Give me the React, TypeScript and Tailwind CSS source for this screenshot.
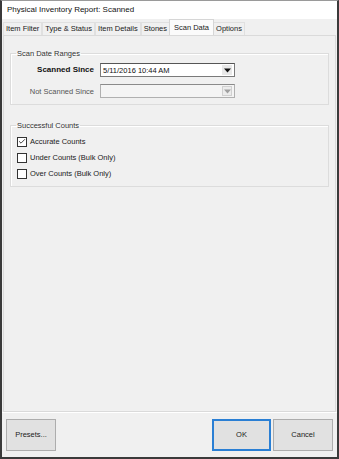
import { Check } from "lucide-react"

const tabs = ["Item Filter", "Type & Status", "Item Details", "Stones", "Scan Data", "Options"]

function Arrow({ disabled }: { disabled?: boolean }) {
  return (
    <svg width="7" height="5" viewBox="0 0 7 5">
      <path d="M0 0.5 H7 L3.5 4.5 Z" fill={disabled ? "#a0a0a0" : "#111"} />
    </svg>
  )
}

function CheckRow({ label, checked }: { label: string; checked?: boolean }) {
  return (
    <div className="flex items-center gap-[3px] h-[16px]">
      <div className="w-[10px] h-[10px] border border-[#333] bg-white flex items-center justify-center">
        {checked && <Check size={9} strokeWidth={2.5} className="text-[#222]" />}
      </div>
      <span>{label}</span>
    </div>
  )
}

export default function App() {
  return (
    <div
      className="w-[339px] h-[459px] flex flex-col bg-[#f0f0f0] border-l-[2px] border-r-[2px] border-b-[2px] border-t border-t-[#9a9a9a] border-[#3a3a3a] text-[7.5px] text-[#1a1a1a]"
      style={{ fontFamily: '"Liberation Sans", Arial, sans-serif' }}
    >
      {/* title bar */}
      <div className="h-[18px] bg-white flex items-center px-[5px] text-[8px] text-[#111]">
        Physical Inventory Report: Scanned
      </div>

      {/* tabs */}
      <div className="h-[16px] flex items-end pl-[1px]">
        {tabs.map((t) => {
          const active = t === "Scan Data"
          return (
            <div
              key={t}
              className={
                active
                  ? "h-[16px] px-[4px] flex items-center bg-[#fbfbfb] border border-b-0 border-[#d6d6d6] -mx-[1px] relative z-10"
                  : "h-[13px] px-[2px] flex items-center border border-b-0 border-[#e0e0e0] bg-[#f0f0f0]"
              }
            >
              {t}
            </div>
          )
        })}
      </div>

      {/* tab panel */}
      <div className="flex-1 mx-[1px] border border-[#dadada] bg-[#f0f0f0] pt-[12px] px-[6px] flex flex-col gap-[15px]">
        <fieldset className="border border-[#dcdcdc] shadow-[inset_1px_1px_0_#fff] px-[4px] pb-[6px]">
          <legend className="px-[1px] ml-[1px] text-[#333]">Scan Date Ranges</legend>
          <div className="flex flex-col gap-[7px] pt-[4px]">
            <div className="flex items-center">
              <div className="w-[79px] text-right font-bold text-[8px] text-[#111]">Scanned Since</div>
              <div className="ml-[6px] w-[135px] h-[14px] bg-white border border-[#7a7a7a] border-t-[#555] flex items-center justify-between pl-[2px] pr-[2px]">
                <span className="text-[#111]">5/11/2016 10:44 AM</span>
                <div className="w-[10px] h-[10px] bg-[#e8e8e8] flex items-center justify-center">
                  <Arrow />
                </div>
              </div>
            </div>
            <div className="flex items-center">
              <div className="w-[79px] text-right text-[#555]">Not Scanned Since</div>
              <div className="ml-[6px] w-[135px] h-[14px] bg-[#f4f4f4] border border-[#b0b0b0] border-t-[#8a8a8a] flex items-center justify-end pr-[2px]">
                <div className="w-[10px] h-[10px] bg-[#ececec] border border-[#d0d0d0] flex items-center justify-center">
                  <Arrow disabled />
                </div>
              </div>
            </div>
          </div>
        </fieldset>

        <fieldset className="border border-[#dcdcdc] shadow-[inset_1px_1px_0_#fff] px-[6px] pb-[4px]">
          <legend className="px-[1px] ml-[-1px] text-[#333]">Successful Counts</legend>
          <div className="flex flex-col pt-[2px]">
            <CheckRow label="Accurate Counts" checked />
            <CheckRow label="Under Counts (Bulk Only)" />
            <CheckRow label="Over Counts (Bulk Only)" />
          </div>
        </fieldset>
      </div>

      {/* buttons */}
      <div className="h-[45px] flex items-center px-[4px] border-t border-white">
        <button className="w-[50px] h-[32px] bg-[#e1e1e1] border border-[#adadad] text-[7.5px] text-[#222]">
          Presets...
        </button>
        <div className="flex-1" />
        <button className="w-[59px] h-[32px] bg-[#e1e1e1] border-[2px] border-[#2a7fd4] text-[7.5px] text-[#222]">
          OK
        </button>
        <button className="ml-[2px] w-[60px] h-[32px] bg-[#e1e1e1] border border-[#adadad] text-[7.5px] text-[#222]">
          Cancel
        </button>
      </div>
    </div>
  )
}
